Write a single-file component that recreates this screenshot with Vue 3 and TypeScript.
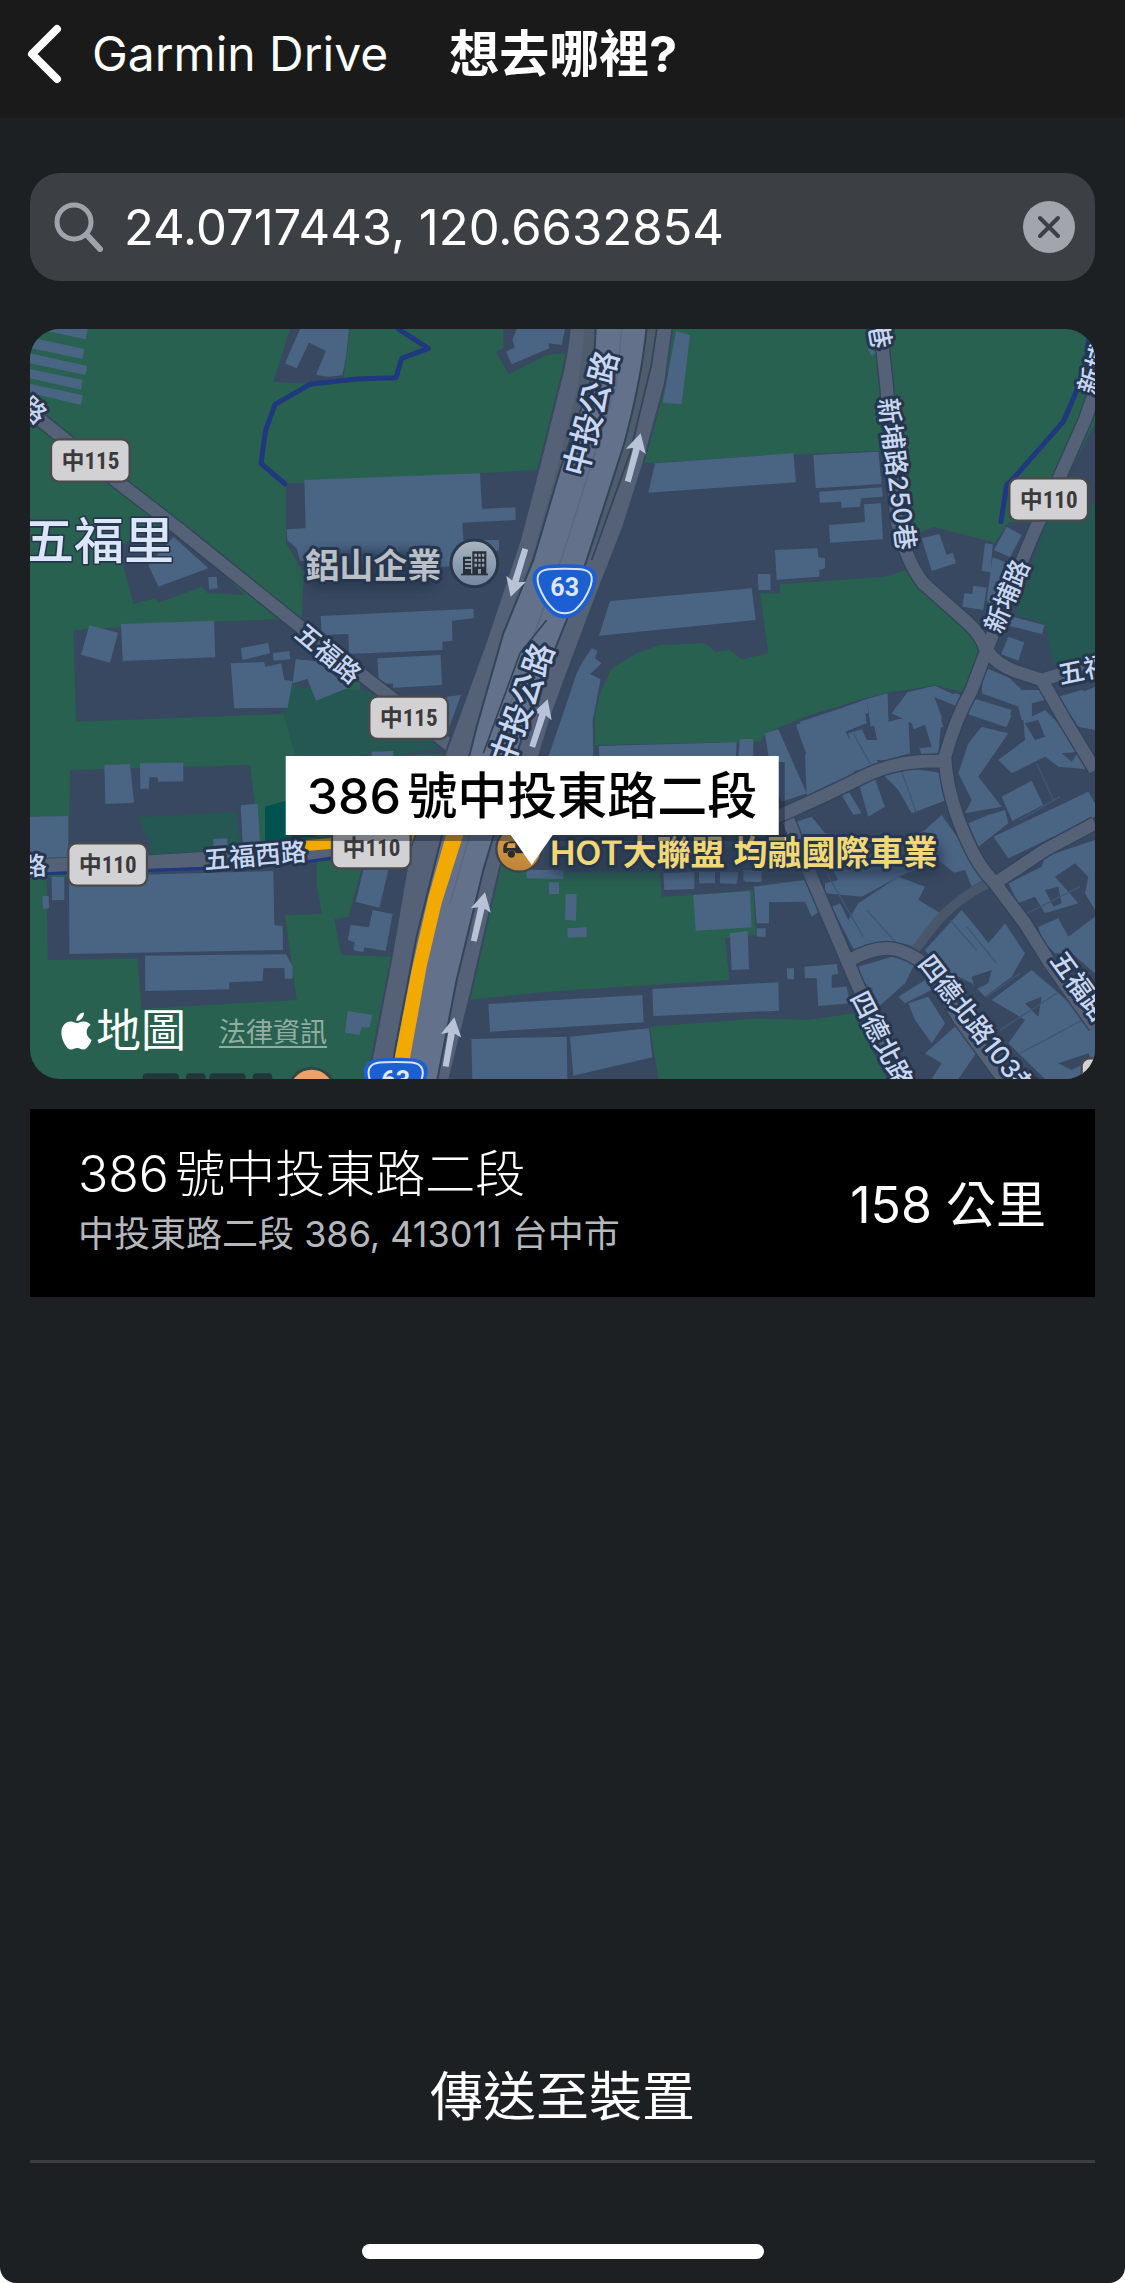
<script setup lang="ts">
import { ref } from 'vue'

const query = ref('24.0717443, 120.6632854')

type Tile = { x: number; y: number; d: string }

const land: Tile[] = [
  {
    x: 0, y: 0,
    d: 'M858 492L1200 470L1440 460L1610 450L1930 430L2280 408L2640 392L2755 640L2800 620L2985 668L3025 605L3130 610L3285 310V2277H1300L1640 1500L1380 1300L1080 1310L1080 1060L948 1155L878 1090L850 1182L228 1205L220 930L645 905L905 895L912 760L858 670Z' +
      'M355 680L500 600L735 825L620 818L605 800L475 848L465 835L400 852Z' +
      'M870 27L820 185L940 192L1030 180L1050 27Z' +
      'M1510 27V85L1488 95L1525 162L1570 140L1640 105L1695 100L1710 27Z'
  },
  {
    x: 0, y: 1110,
    d: 'M210 240L750 225L765 345L780 460H950V580L965 672L855 675L890 930L425 957L412 805L143 810L140 560H205Z' +
      'M1090 520L1045 680L1003 688L1023 795L1180 800L1330 400Z'
  }
]

const fields: Tile[] = [
  {
    x: 1080, y: 0,
    d: 'M705 1275V1180L720 1120L755 1045L830 1000L900 975L1035 970L1065 995L1110 990L1145 1018L1225 1000L1200 820L1260 820V793L1575 770L1640 750L1700 800L1840 920L1870 1000L1810 1120L1730 1100L1595 1115L1515 1135L1335 1190L1220 1240L1200 1265Z'
  },
  {
    x: 1080, y: 1110,
    d: 'M415 545H900L905 620L1000 615L1180 600L1188 735L1095 745L1108 870L870 885L560 905L325 930Z' +
      'M870 1010L1200 985L1345 990L1480 970L1580 1167H895Z'
  }
]

const darkFields: Tile[] = [
  { x: 2175, y: 0, d: 'M965 600L1110 550V1005L985 1030L960 910L870 885Z' },
  { x: 0, y: 1110, d: 'M850 70L880 -10L1080 0L1200 30L1330 170L1200 195H885ZM412 382L710 365L725 490L450 500V460Z' }
]

const buildings: Tile[] = [
  {
    x: 0, y: 0,
    d: 'M140 27H263L257 58L150 35ZM105 55L253 87L247 117L95 85ZM90 100L262 138L256 165L90 130ZM90 147L248 180L243 209L90 175ZM90 192L249 226L243 255L90 218Z' +
      'M900 27H1047L1038 110L1027 165L985 170L948 165L978 92L927 68L890 145L855 130Z' +
      'M445 735L520 650L625 745L475 800ZM625 772L650 770L653 805L627 807Z' +
      'M268 916L354 938L330 1028L243 1004ZM363 912L642 902L646 1012L368 1023ZM722 985L805 968L810 1000L728 1020ZM818 1000L868 993L871 1018L821 1022Z' +
      'M692 1030L792 1026L797 1040L843 1030L853 1080L877 1083L863 1163L703 1165ZM887 1017L960 1025L1042 1105L948 1142L922 1077L878 1090Z' +
      'M913 480L1440 460L1446 567L1546 562L1547 600L1387 608L1390 660H1497V690L1340 740L900 722L890 685L862 660L860 628L917 625Z' +
      'M962 888L1420 866L1422 895L1356 902L1357 962L1327 965V990L1047 1002L1045 942L965 945Z' +
      'M1132 1015L1322 1005L1326 1095L1180 1103L1178 1090L1137 1092ZM1340 1130L1383 1125L1330 1270Z'
  },
  {
    x: 1080, y: 0,
    d: 'M470 27H615L605 75L565 70L568 85L455 133L438 95L465 82L457 60ZM948 33L990 45L965 252L908 248Z' +
      'M885 430L1300 400L1308 487L865 518ZM750 843L1175 805L1187 900L717 947Z' +
      'M650 1060L665 1030L695 985L712 992L705 1015L725 1030L690 1062L722 1078L698 1200L700 1310H565L620 1150Z'
  },
  {
    x: 2175, y: 0,
    d: 'M265 405L460 395L470 492L272 505ZM282 515L470 502L474 530L408 535L405 560L350 563L348 545L285 548ZM417 553L468 550L474 658L315 668L312 615L420 607Z' +
      'M150 690L277 685L280 712L300 715V745L283 750V770L155 779ZM98 762H136L137 810H100ZM590 655L643 642L665 705L683 698L693 730L620 753Z' +
      'M845 620L890 645L855 712L807 690ZM780 670L803 673L797 757L770 752ZM803 712L850 730L800 860L785 840ZM745 797L785 803L775 870L712 860L718 820L742 822Z' +
      'M860 890L958 915L952 943L855 918ZM850 950L898 967L880 1022L828 1003ZM427 85L455 95L440 108Z' +
      'M775 1040L855 1075L890 1110H950L960 1140L920 1150V1200H890L880 1160L770 1120ZM1020 1140L1110 1100V1200H1060ZM730 1130L860 1170L840 1220L720 1180Z'
  },
  {
    x: 0, y: 1110,
    d: 'M313 225L390 222L402 338L316 342ZM420 220L550 218V274L474 275L473 262H448L447 296L421 297ZM90 380L204 378L205 510L90 512ZM722 345L773 342L780 460L728 462ZM640 447L682 445V465L640 467Z' +
      'M155 560H193V630L156 631ZM127 618L146 617L147 655L129 656ZM207 560L820 543L823 705L848 708L849 780L208 792Z' +
      'M435 797L858 793L878 830V866H855L853 834L790 835L788 873L688 877L687 898L436 903Z' +
      'M1090 540H1165L1138 653L1067 635ZM1118 660L1178 672L1157 783L1093 772L1090 787L1060 780L1065 757L1043 750L1052 705L1107 712Z' +
      'M1043 963L1117 975L1110 1012H1085L1078 1035L1035 1028ZM1115 185L1180 183V200H1115Z'
  },
  {
    x: 1080, y: 1110,
    d: 'M385 942L847 915L851 997L390 1025ZM877 897L1255 877L1257 962L880 978ZM334 1047L620 1040L622 1167H337ZM630 1040L867 1015L877 1102L640 1157Z' +
      'M567 577H597V612L567 613ZM617 612L650 613L648 692L615 690ZM622 715L680 712V740L623 743ZM500 540H610V567L500 565Z' +
      'M1000 615L1170 603L1175 712L1007 722ZM910 550L1003 545V597L913 600ZM1017 545H1065V580H1017ZM1080 545H1135L1130 582L1080 580ZM1150 540H1200V575L1150 572Z' +
      'M1110 730L1163 723L1167 838L1115 840ZM717 168L1130 157L1128 200H717ZM1140 147H1180V200H1135Z'
  },
  {
    x: 2175, y: 1110,
    d: 'M120 130L160 118L245 310L170 335L140 260ZM213 105L425 27L430 70L345 95L375 150L400 240L275 280ZM370 130L410 118L465 230L400 245ZM430 30L487 12L490 95L550 80L555 190L500 205L470 210Z' +
      'M500 70L545 10L620 0L650 80L640 190L590 195L560 100ZM660 30L690 10L725 20L700 50ZM730 25L860 75L845 110L715 65Z' +
      'M730 160L770 110L850 130L760 260L830 350L720 370L740 330L700 250ZM820 210L900 150L890 20H920V80L960 60L1020 120L1110 240L1000 230L960 200L860 250Z' +
      'M830 320L920 272L955 345L862 393ZM805 440L1090 305L1110 340V380L850 505ZM730 400L790 375L840 360L850 400L760 470Z' +
      'M350 315L372 305L410 370L385 375ZM395 260L440 240L480 350L430 380ZM460 240L560 235L650 250L665 330L560 370L520 300Z' +
      'M200 400L260 380L300 430L400 440L480 480L600 420L650 375L710 460L790 560L740 590L640 510L520 560L410 620L300 610V580L340 570L300 500L230 480Z' +
      'M87 590L240 570L290 660L260 680L240 635L132 637V700H95ZM95 715H122V740H95ZM60 540H110V575H60ZM185 835H207V868H187ZM238 830L335 822L340 852L320 855V893L365 890L375 940L280 948L275 865H240Z' +
      'M320 650L345 640L370 690L400 640L520 560L600 590L580 630L665 680L570 770L530 760L480 755L390 785Z' +
      'M600 780L710 660L760 720L790 760L840 700L900 790L860 860L780 920L740 880L640 830Z' +
      'M850 580L950 530L960 500L1110 450V660L1080 610L1090 560L1050 520L990 560L1060 640L960 670L930 620L880 640ZM1000 20L1070 0L1110 20V120L1060 110Z' +
      'M940 710L1000 685L1030 740L1110 680V850L1040 790H990L950 750Z' +
      'M400 830L500 800L570 820L540 880L450 960L420 900ZM520 920L600 870L620 900L540 940ZM550 940L610 920L660 1000L620 1060L570 990ZM600 1090L690 1010L760 1080L700 1167H620L650 1120Z' +
      'M800 930L920 840L990 900L1110 1010V1167H960L850 1060L900 990Z'
  }
]

const yards: Tile[] = [
  {
    x: 2175, y: 1110,
    d: 'M560 120L600 105L620 170L585 175ZM900 100L940 90L960 140L930 150ZM1010 190L1060 185L1040 215ZM550 400L590 380L600 410L565 425ZM640 560L720 540L740 590L670 650L600 640ZM740 860L800 840L790 880L750 900ZM960 600L1000 590L1010 640L985 650ZM1050 830L1110 860V900L1060 880ZM900 940L950 920L940 980ZM1000 1120L1090 1090L1100 1110L1040 1140Z'
  }
]

const streets =
  'M60 250L215 375L365 495L540 630L720 775L900 920L1170 1130L1390 1310' +
  'M2640 20L2645 60L2660 200L2670 350L2690 600L2720 700Q2740 750 2770 790L2900 905Q2945 945 2958 990' +
  'M3300 170L3255 300L3175 480L3105 630L3025 820L2960 990L2915 1110Q2865 1200 2835 1310Q2840 1430 2905 1570Q2935 1640 2985 1690L3075 1810L3150 1930L3285 2120' +
  'M2960 990Q2990 1035 3050 1055L3125 1080L3285 1030M3125 1080L3200 1210L3285 1350' +
  'M3285 1510L3135 1590L2985 1690' +
  'M2840 1325Q2700 1315 2590 1370T2355 1480L2300 1500' +
  'M2365 1500L2425 1650L2485 1790L2575 2000L2710 2277' +
  'M2550 1920Q2640 1870 2700 1892T2790 1950L2880 2100L3010 2277'

const arrows = [
  { x: 1922, y: 340, r: 15 },
  { x: 1532, y: 830, r: 197 },
  { x: 1643, y: 1138, r: 18 },
  { x: 1455, y: 1717, r: 13 },
  { x: 1363, y: 2092, r: 10 }
]

const badges = [
  { x: 153, y: 358, t: '中115' },
  { x: 1108, y: 1130, t: '中115' },
  { x: 3028, y: 475, t: '中110' },
  { x: 205, y: 1570, t: '中110' },
  { x: 996, y: 1518, t: '中110' }
]

const roadLabels = [
  { x: 985, y: 1000, r: 40, s: 76, t: '五福路' },
  { x: 1772, y: 280, r: -75, s: 96, t: '中投公路' },
  { x: 1565, y: 1153, r: -70, s: 96, t: '中投公路' },
  { x: 2692, y: 462, r: 83, s: 78, t: '新埔路250巷' },
  { x: 2640, y: 46, r: 80, s: 78, t: '巷' },
  { x: 3020, y: 828, r: -67, s: 76, t: '新埔路' },
  { x: 3282, y: 146, r: -72, s: 76, t: '新埔' },
  { x: 3252, y: 1048, r: -12, s: 78, t: '五福' },
  { x: 100, y: 270, r: 42, s: 76, t: '路' },
  { x: 102, y: 1637, r: -3, s: 76, t: '路' },
  { x: 765, y: 1606, r: -5, s: 77, t: '五福西路' },
  { x: 2646, y: 2158, r: 63, s: 78, t: '四德北路' },
  { x: 2934, y: 2120, r: 52, s: 78, t: '四德北路103巷' },
  { x: 3240, y: 1998, r: 54, s: 78, t: '五福路' }
]

const shields = [
  { x: 1694, y: 733 },
  { x: 1187, y: 2213 }
]
</script>

<template>
  <div class="screen">
    <header class="bar">
      <button class="back" type="button">
        <svg class="chevron" viewBox="0 0 36 60" aria-hidden="true">
          <path d="M31 5L6 30L31 55" fill="none" stroke="#fff" stroke-width="8" stroke-linecap="round" stroke-linejoin="round" />
        </svg>
        <span>Garmin Drive</span>
      </button>
      <h1>想去哪裡?</h1>
    </header>

    <main class="content">
      <form class="search" role="search" @submit.prevent>
        <svg class="lens" viewBox="0 0 50 50" aria-hidden="true">
          <circle cx="20" cy="20" r="17" fill="none" stroke="#a0a3aa" stroke-width="5" />
          <path d="M33 33L46 47" stroke="#a0a3aa" stroke-width="6" stroke-linecap="round" />
        </svg>
        <input v-model="query" type="text" aria-label="想去哪裡?" />
        <button class="clear" type="button" aria-label="清除" @click="query = ''">
          <svg viewBox="0 0 52 52" aria-hidden="true">
            <circle cx="26" cy="26" r="26" fill="#a2a5ac" />
            <path d="M17 17L35 35M35 17L17 35" stroke="#3c3f43" stroke-width="4" stroke-linecap="round" />
          </svg>
        </button>
      </form>

      <section class="map" aria-label="地圖">
        <svg class="canvas" viewBox="90 27 3195 2250" preserveAspectRatio="xMidYMid slice">
          <defs>
            <linearGradient id="steel" x1="0" y1="0" x2="0" y2="1">
              <stop offset="0" stop-color="#aab6c0" />
              <stop offset="1" stop-color="#7186a0" />
            </linearGradient>
            <linearGradient id="amber" x1="0" y1="0" x2="0" y2="1">
              <stop offset="0" stop-color="#dda045" />
              <stop offset="1" stop-color="#bd8438" />
            </linearGradient>
            <filter id="glow" x="-10%" y="-60%" width="120%" height="240%">
              <feGaussianBlur stdDeviation="14" />
            </filter>
          </defs>
          <rect x="90" y="27" width="3195" height="2250" fill="#28614f" />
          <g fill="#384860">
            <path v-for="(p, i) in land" :key="i" :transform="`translate(${p.x} ${p.y})`" :d="p.d" />
          </g>
          <g fill="#28614f">
            <path v-for="(p, i) in fields" :key="i" :transform="`translate(${p.x} ${p.y})`" :d="p.d" />
          </g>
          <g fill="#255853">
            <path v-for="(p, i) in darkFields" :key="i" :transform="`translate(${p.x} ${p.y})`" :d="p.d" />
          </g>
          <path d="M795 1460L855 1443L950 1500V1550L795 1565Z" fill="#00524f" />
          <path d="M2415 1305Q2520 1225 2600 1247L2662 1230L2660 1310H2600L2550 1370L2420 1430ZM2600 1247L2662 1230L2665 1320H2625Z" fill="#4a6484" />
          <path d="M2295 1240L2420 1190L2595 1137L2662 1120L2805 1095L2900 1120L2860 1260L2300 1260Z" fill="#384860" />
          <path d="M2600 1137L2662 1120L2665 1200L2612 1220ZM2720 1117L2805 1097L2885 1135L2875 1160L2800 1130L2830 1220L2760 1240ZM2400 1205L2590 1143L2600 1210L2420 1280Z" fill="#4a6484" />
          <g fill="#4a6484">
            <path v-for="(p, i) in buildings" :key="i" :transform="`translate(${p.x} ${p.y})`" :d="p.d" />
          </g>
          <g fill="#384860">
            <path v-for="(p, i) in yards" :key="i" :transform="`translate(${p.x} ${p.y})`" :d="p.d" />
          </g>
          <path
            d="M2480 1660L2590 1850M2600 1770L2690 1870M2850 1800L2930 1890M2960 2030L3060 1960M3000 2130L3170 2020M3060 2200L3285 2080M3110 1330L3160 1440M2560 1240L2610 1330M2700 1340L2750 1480M3060 1500L3180 1430M2540 1950L2620 2010M2900 1820L2990 1930M3080 1780L3240 1700"
            fill="none" stroke="#3f5675" stroke-width="4"
          />

          <g fill="none" stroke="#203880" stroke-width="15" stroke-linejoin="round" stroke-linecap="round">
            <path d="M855 492L783 430L797 330L825 253L930 193L1070 177L1188 173L1205 115L1285 85L1195 27" />
            <path d="M3265 60L3260 120Q3250 170 3235 200L3190 305L3045 470L3020 495L3003 605" />
          </g>

          <g fill="none" stroke-linejoin="round">
            <path d="M2745 1890L2815 1800Q2880 1730 2965 1690" stroke="#4a566a" stroke-width="28" />
            <path :d="streets" stroke="#33445a" stroke-width="46" />
            <path d="M60 1642L445 1630L610 1620L920 1600L1240 1580L1360 1520" stroke="#33445a" stroke-width="52" />
            <path :d="streets" stroke="#546177" stroke-width="38" />
            <path d="M60 1640L445 1628L610 1618L920 1600L1240 1580L1360 1520" stroke="#546177" stroke-width="44" />
            <path d="M90 1663L205 1658L450 1651L620 1645L920 1625L1010 1612" stroke="#203880" stroke-width="9" />
            <path d="M915 1577L1000 1570M1230 1560L1340 1535" stroke="#f2a900" stroke-width="32" />
          </g>

          <g stroke="#384860" stroke-width="6">
            <path fill="#546177" d="M1710 20Q1700 120 1680 190L1620 430L1560 660L1460 960L1380 1180L1230 1590L1175 1910L1115 2220L1100 2290H1345L1410 2030L1500 1640L1620 1300L1650 1200L1690 1090L1780 850L1870 620L1930 430L1995 190L2018 20Z" />
            <path fill="#4e5c6c" d="M1755 20L1735 190L1670 450L1600 700L1550 850L1420 1240L1600 900L1690 600L1785 190V20Z" stroke="none" />
            <path fill="#4e5c6c" d="M1975 20L1950 150L1890 430L1760 730L1790 620L1870 380L1938 20Z" stroke="none" />
            <path fill="#64718a" stroke="#33435a" d="M1787 20Q1785 120 1770 190L1680 450L1600 720L1510 940L1430 1220L1410 1300L1325 1550L1250 1850L1185 2190L1170 2290H1310L1370 1980L1450 1650L1510 1450L1580 1200L1700 900L1760 720L1870 380Q1925 180 1940 20Z" />
            <path fill="none" stroke="#5a6780" stroke-width="4" d="M1865 27L1850 190L1690 700L1600 950L1480 1300L1350 1750" />
            <path fill="none" stroke="#33435a" d="M1970 27L1955 130L1890 400L1775 720M1640 900L1560 1000L1450 1300" stroke-width="5" />
          </g>
          <path fill="#f2a900" d="M1338 1545H1390L1325 1750L1280 1940L1228 2225H1182L1235 1950L1285 1730Z" />

          <g fill="#b9c3d8">
            <path v-for="(a, i) in arrows" :key="i" :transform="`translate(${a.x} ${a.y}) rotate(${a.r})`" d="M0 0L31 56L10 48L9 150H-9L-10 48L-31 56Z" />
          </g>

          <g class="halo">
            <text
              v-for="(l, i) in roadLabels" :key="i" class="road"
              :transform="`translate(${l.x} ${l.y}) rotate(${l.r})`"
              :font-size="l.s" :y="l.s * 0.37" text-anchor="middle"
            >{{ l.t }}</text>
          </g>

          <g v-for="(b, i) in badges" :key="i">
            <rect :x="b.x" :y="b.y" width="236" height="127" rx="24" fill="#d2d2d5" stroke="#4b494c" stroke-width="7" />
            <text class="badge" :x="b.x + 118" :y="b.y + 89" text-anchor="middle">{{ b.t }}</text>
          </g>
          <rect x="3245" y="2215" width="236" height="127" rx="24" fill="#d2d2d5" stroke="#4b494c" stroke-width="7" />

          <g v-for="(s, i) in shields" :key="i" :transform="`translate(${s.x} ${s.y})`">
            <path fill="#1b5fd0" d="M0 0C45 0 70 2 84 14C100 28 98 48 92 66C80 104 60 130 40 148C18 166 -18 166 -40 148C-60 130 -80 104 -92 66C-98 48 -100 28 -84 14C-70 2 -45 0 0 0Z" />
            <path fill="none" stroke="#d8e2f2" stroke-width="6" d="M0 13C42 13 62 14 73 24C85 34 83 48 78 64C66 98 50 120 32 136C14 150 -14 150 -32 136C-50 120 -66 98 -78 64C-83 48 -85 34 -73 24C-62 14 -42 13 0 13Z" />
            <text class="route" x="0" y="94" text-anchor="middle">63</text>
          </g>

          <text class="district" x="522" y="716" text-anchor="end">五福里</text>

          <rect x="915" y="690" width="400" height="120" rx="50" fill="#26384e" opacity=".7" filter="url(#glow)" />
          <rect x="1640" y="1560" width="1190" height="110" rx="50" fill="#26384e" opacity=".6" filter="url(#glow)" />
          <text class="poi grey" x="1324" y="773" text-anchor="end">鋁山企業</text>
          <circle cx="1423" cy="730" r="70" fill="url(#steel)" stroke="#2c384b" stroke-width="9" />
          <g fill="#2a2e37">
            <path d="M1383 761H1464V766H1383Z" />
            <path fill-rule="evenodd" d="M1417 694H1459V762H1417ZM1423 701V710H1431V701ZM1435 701V710H1442V701ZM1446 701V710H1453V701ZM1423 716V725H1431V716ZM1435 716V725H1442V716ZM1446 716V725H1453V716ZM1423 731V740H1431V731ZM1435 731V740H1442V731ZM1446 731V740H1453V731ZM1434 747V762H1443V747Z" />
            <path fill-rule="evenodd" d="M1389 710H1413V762H1389ZM1395 717V723H1413V717ZM1395 729V735H1413V729ZM1395 741V747H1413V741Z" />
          </g>

          <circle cx="1557" cy="1587" r="68" fill="url(#amber)" stroke="#3c4350" stroke-width="7" />
          <path fill="#2b2c30" d="M1510 1592Q1508 1575 1516 1568L1530 1564H1590Q1606 1570 1606 1600H1548A15 15 0 0 0 1520 1600L1510 1598Z" />
          <circle cx="1534" cy="1602" r="11" fill="#2b2c30" />
          <path fill="#d99d44" d="M1524 1570H1546V1584H1520Z" />
          <text class="poi gold" x="1650" y="1635">HOT大聯盟 均融國際車業</text>

          <path d="M440 2272H830" stroke="#22363c" stroke-width="24" stroke-linecap="round" stroke-dasharray="85 45 35 35" />
          <circle cx="935" cy="2315" r="70" fill="#efa066" stroke="#2f4745" stroke-width="9" />
        </svg>

        <div class="callout">386號中投東路二段</div>

        <div class="credit">
          <span class="brand">
            <svg viewBox="2 0 20 24" aria-hidden="true">
              <path fill="#fff" d="M12.152 6.896c-.948 0-2.415-1.078-3.96-1.04-2.04.027-3.91 1.183-4.961 3.014-2.117 3.675-.546 9.103 1.519 12.09 1.013 1.454 2.208 3.09 3.792 3.039 1.52-.065 2.09-.987 3.935-.987 1.831 0 2.35.987 3.96.948 1.637-.026 2.676-1.48 3.676-2.948 1.156-1.688 1.636-3.325 1.662-3.415-.039-.013-3.182-1.221-3.22-4.857-.026-3.04 2.48-4.494 2.597-4.559-1.429-2.09-3.623-2.324-4.39-2.376-2-.156-3.675 1.09-4.61 1.09zM15.53 3.83c.843-1.012 1.4-2.427 1.245-3.83-1.207.052-2.662.805-3.532 1.818-.78.896-1.454 2.338-1.273 3.714 1.338.104 2.715-.688 3.559-1.701" />
            </svg>
            地圖
          </span>
          <a class="legal" href="#legal">法律資訊</a>
        </div>
      </section>

      <section class="result">
        <div class="place">
          <h2>386號中投東路二段</h2>
          <p>中投東路二段 386, 413011 台中市</p>
        </div>
        <span class="distance">158 公里</span>
      </section>
    </main>

    <footer class="dock">
      <button class="send" type="button">傳送至裝置</button>
      <div class="home"></div>
    </footer>
  </div>
</template>

<style>
body {
  margin: 0;
  background: #fff;
}
</style>

<style scoped>
.screen {
  display: flex;
  flex-direction: column;
  min-height: 100vh;
  background: #1d2023;
  color: #fff;
  font-family: Inter, "Noto Sans CJK TC", sans-serif;
  text-autospace: normal;
  border-radius: 0 0 16px 16px;
  overflow: hidden;
}

button,
input {
  padding: 0;
  border: 0;
  background: none;
  color: inherit;
  font: inherit;
}

.bar {
  display: flex;
  align-items: center;
  gap: 61px;
  box-sizing: border-box;
  height: 118px;
  padding: 0 26px 10px;
  background: #1a1a1a;
}

.back {
  display: flex;
  align-items: center;
  gap: 30px;
  font-size: 48px;
  line-height: 60px;
}

.chevron {
  width: 36px;
  height: 60px;
}

h1 {
  margin: 0;
  font-size: 50px;
  line-height: 60px;
  font-weight: 700;
}

.content {
  display: flex;
  flex-direction: column;
  padding: 55px 30px 0;
}

.search {
  display: flex;
  align-items: center;
  height: 108px;
  padding: 0 20px 0 24px;
  border-radius: 30px;
  background: #3c3f43;
}

.lens {
  flex: none;
  width: 50px;
  height: 50px;
}

.search input {
  flex: 1;
  min-width: 0;
  margin-left: 20px;
  padding-top: 2px;
  outline: 0;
  font-size: 49px;
  line-height: 60px;
}

.clear,
.clear svg {
  display: block;
  width: 52px;
  height: 52px;
}

.map {
  position: relative;
  margin-top: 48px;
  aspect-ratio: 1065 / 750;
  border-radius: 30px;
  overflow: hidden;
}

.canvas {
  display: block;
  width: 100%;
  height: 100%;
  font-family: Inter, "Noto Sans CJK TC", sans-serif;
  text-autospace: no-autospace;
}

.road {
  fill: #c9d7f2;
  font-weight: 500;
}

.road,
.poi,
.district {
  stroke: #26364f;
  stroke-width: 18px;
  stroke-linejoin: round;
  paint-order: stroke;
}

.badge {
  fill: #3c3a3c;
  font-family: "Roboto Condensed", "Liberation Sans Narrow", Roboto, "Noto Sans CJK TC", sans-serif;
  font-size: 69px;
  font-weight: 700;
}

.route {
  fill: #dfe6f2;
  font-family: Roboto, sans-serif;
  font-size: 75px;
  font-weight: 700;
}

.district {
  fill: #dbe6f8;
  stroke-width: 10px;
  font-size: 150px;
  font-weight: 500;
}

.poi {
  font-size: 102px;
  font-weight: 600;
}

.grey {
  fill: #bac0c6;
}

.gold {
  fill: #f1d875;
}

.callout {
  position: absolute;
  top: calc(427 / 750 * 100%);
  left: calc(502 / 1065 * 100%);
  box-sizing: border-box;
  height: 79px;
  padding: 2px 21px 0;
  transform: translateX(-50%);
  background: #fff;
  box-shadow: 6px 6px 0 rgb(30 40 55 / 50%);
  color: #000;
  font-size: 50px;
  font-weight: 500;
  line-height: 77px;
  white-space: nowrap;
}

.callout::after {
  content: "";
  position: absolute;
  top: 100%;
  left: 50%;
  border: 21px solid transparent;
  border-top: 30px solid #fff;
  border-bottom: 0;
  transform: translateX(-50%);
}

.credit {
  position: absolute;
  left: 31px;
  bottom: 18px;
  display: flex;
  align-items: center;
  gap: 33px;
}

.brand {
  display: flex;
  align-items: center;
  gap: 4px;
  font-size: 45px;
  line-height: 60px;
}

.brand svg {
  width: 31px;
  height: 38px;
}

.legal {
  padding-top: 4px;
  color: #93aca3;
  font-size: 27px;
  line-height: 36px;
  text-underline-offset: 4px;
}

.result {
  display: flex;
  align-items: center;
  justify-content: space-between;
  min-height: 188px;
  margin-top: 30px;
  padding: 0 49px 0 48px;
  background: #000;
}

.place {
  padding-bottom: 4px;
}

h2 {
  margin: 0;
  font-size: 50px;
  font-weight: 300;
  line-height: 66px;
}

p {
  margin: 0;
  color: #b4b8bc;
  font-size: 36px;
  line-height: 54px;
}

.distance {
  padding-top: 4px;
  font-size: 50px;
  line-height: 60px;
}

.dock {
  display: flex;
  flex-direction: column;
  align-items: center;
  margin-top: auto;
  padding: 0 30px 24px;
}

.send {
  align-self: stretch;
  padding-bottom: 30px;
  border-bottom: 3px solid #3c3d41;
  font-size: 53px;
  line-height: 66px;
}

.home {
  width: 36vw;
  max-width: 402px;
  height: 15px;
  margin-top: 81px;
  border-radius: 8px;
  background: #fff;
}
</style>
